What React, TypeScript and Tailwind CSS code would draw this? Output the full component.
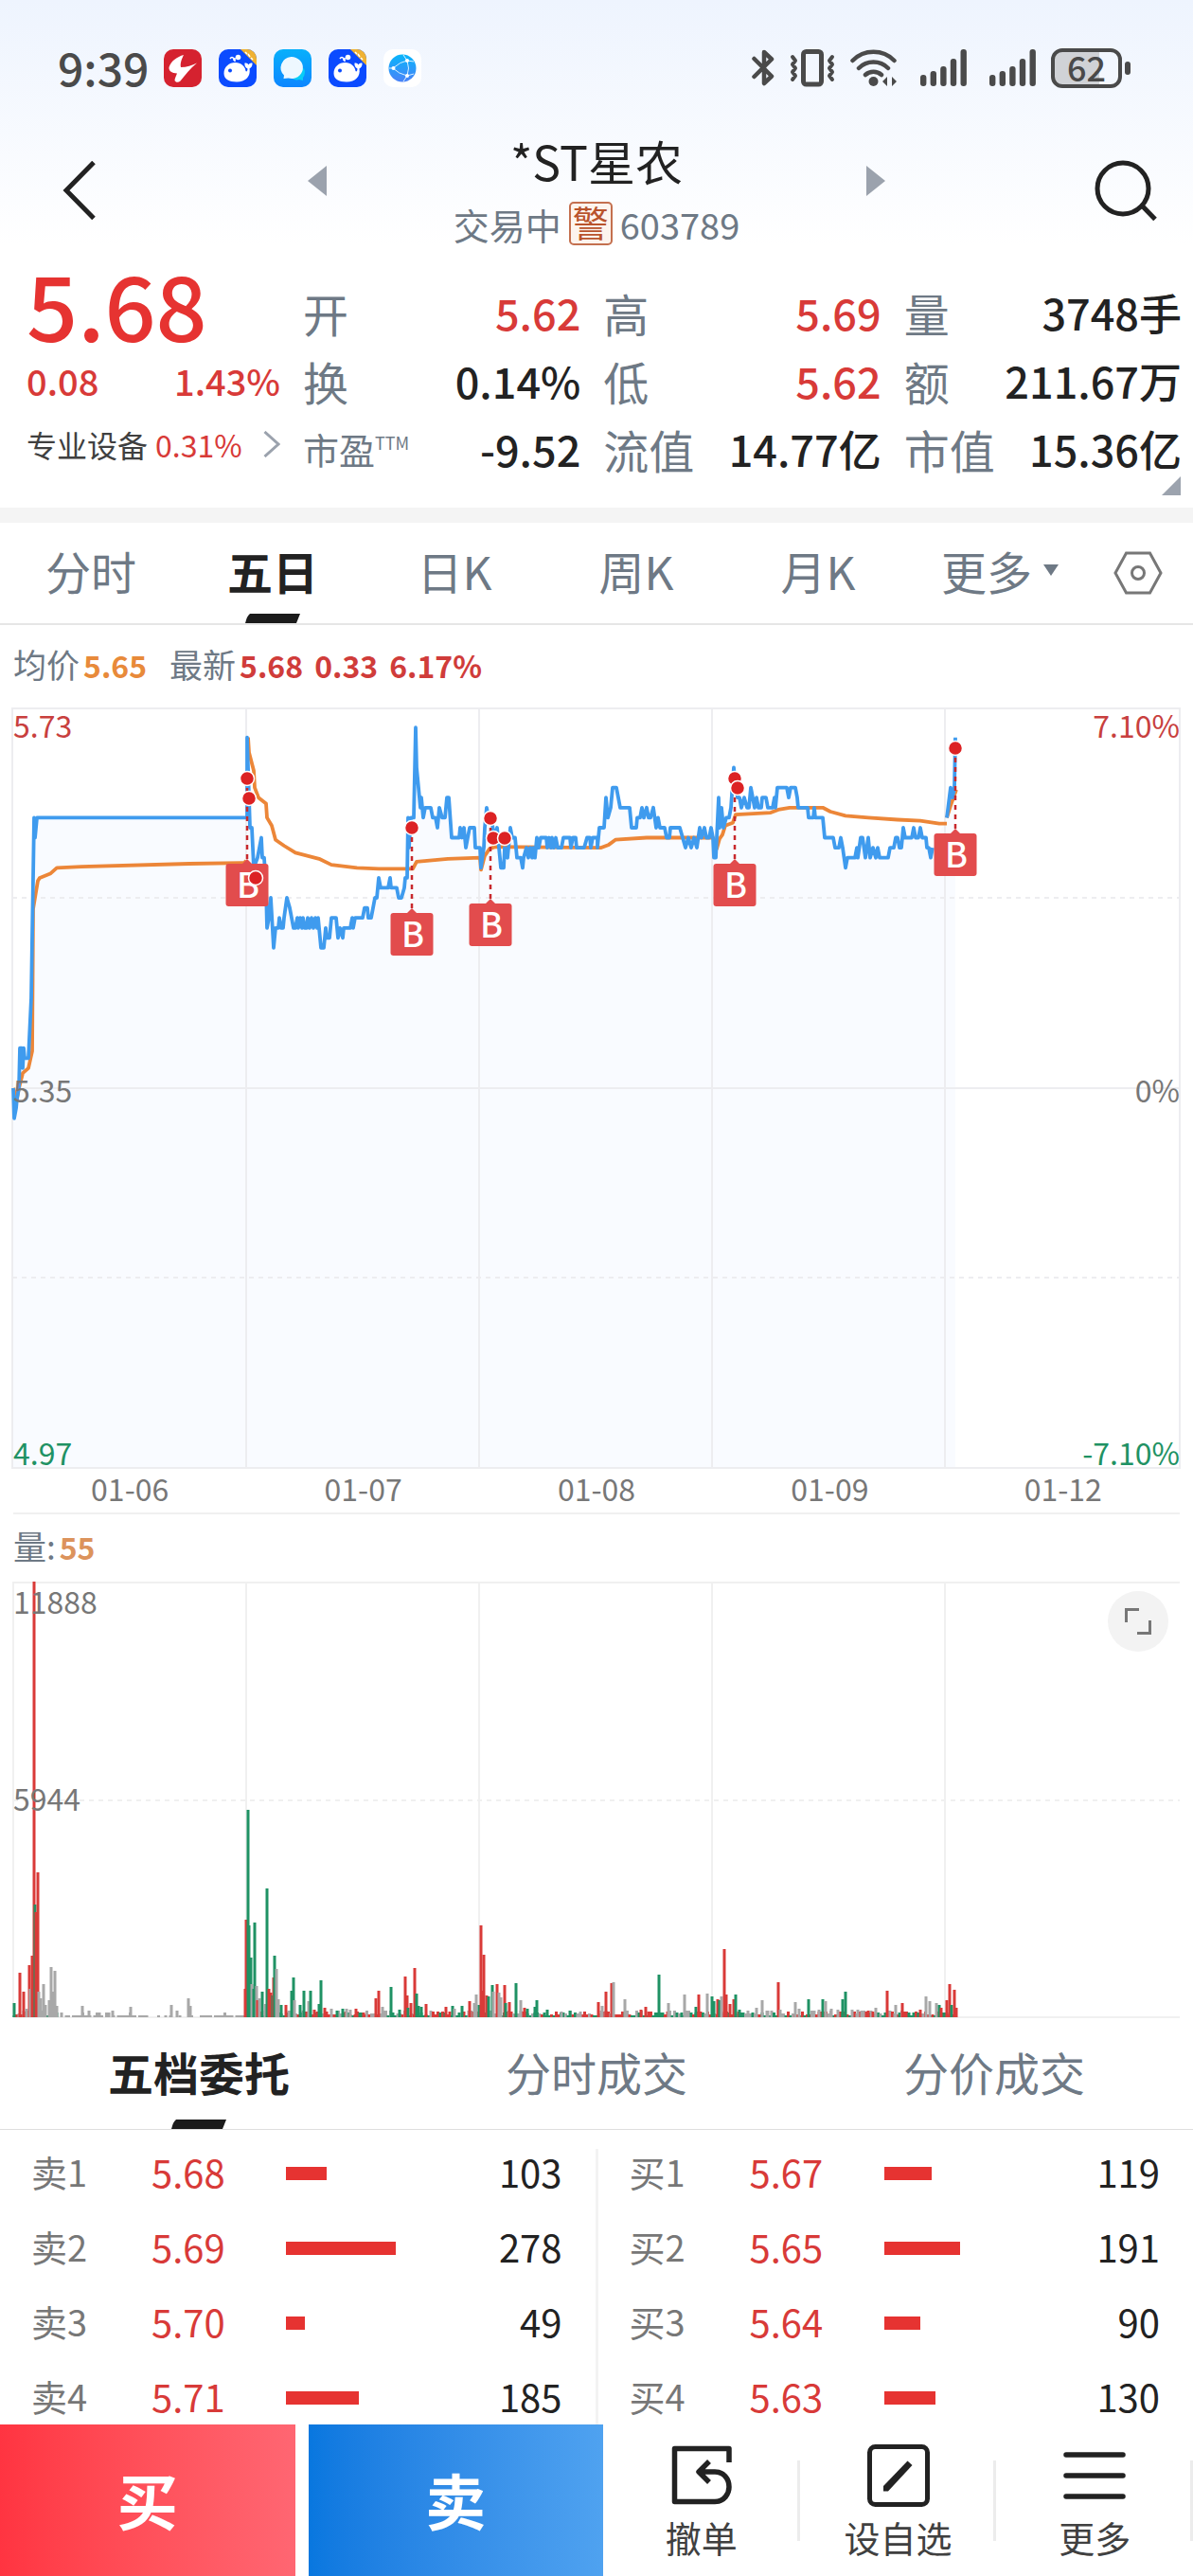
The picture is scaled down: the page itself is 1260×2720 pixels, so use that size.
import { useState } from "react";

type Point = [number, number];
type Tone = "r" | "g" | "n";

const quotes = [
  { label: "开", value: "5.62", up: true },
  { label: "高", value: "5.69", up: true },
  { label: "量", value: "3748手" },
  { label: "换", value: "0.14%" },
  { label: "低", value: "5.62", up: true },
  { label: "额", value: "211.67万" },
  { label: "市盈", sup: "TTM", value: "-9.52" },
  { label: "流值", value: "14.77亿" },
  { label: "市值", value: "15.36亿" },
];

const periods = ["分时", "五日", "日K", "周K", "月K"];
const bookTabs = ["五档委托", "分时成交", "分价成交"];
const days = ["01-06", "01-07", "01-08", "01-09", "01-12"];

const asks = [
  { label: "卖1", price: "5.68", volume: 103 },
  { label: "卖2", price: "5.69", volume: 278 },
  { label: "卖3", price: "5.70", volume: 49 },
  { label: "卖4", price: "5.71", volume: 185 },
];

const bids = [
  { label: "买1", price: "5.67", volume: 119 },
  { label: "买2", price: "5.65", volume: 191 },
  { label: "买3", price: "5.64", volume: 90 },
  { label: "买4", price: "5.63", volume: 130 },
];

// [x, price in cents]
const priceMain: Point[] = [
  [14, 535], [15, 532], [17, 533], [18, 534], [20, 535], [21, 539], [23, 539], [24, 537], [25, 539], [26, 538], [30, 538],
  [32, 542], [33, 544], [36, 562], [37, 560], [39, 562], [261, 562],
];
const priceRest: Point[] = [
  [261, 570], [262, 567], [263, 564], [264, 561], [266, 561], [267, 559], [268, 557], [272, 558], [276, 560], [277, 558], [279, 558],
  [281, 555], [282, 551], [284, 552], [286, 554], [289, 549], [291, 551], [294, 551], [295, 552], [297, 551], [299, 551], [300, 552],
  [303, 554], [306, 553], [310, 551], [312, 551], [314, 552], [315, 551], [317, 552], [319, 551], [320, 552], [322, 551], [324, 551],
  [325, 552], [327, 551], [329, 552], [331, 551], [333, 552], [335, 551], [336, 552], [339, 549], [342, 549], [344, 551], [345, 550],
  [348, 550], [350, 552], [355, 552], [357, 550], [359, 551], [362, 550], [363, 551], [370, 551], [372, 552], [373, 551], [375, 552],
  [383, 552], [385, 553], [388, 553], [389, 552], [392, 552], [394, 553], [396, 554], [398, 554], [400, 556], [402, 555], [410, 555],
  [412, 556], [413, 555], [419, 555], [421, 554], [424, 554], [427, 555], [428, 556], [430, 556], [431, 562], [432, 559], [434, 562],
  [437, 562], [439, 571], [440, 567], [443, 564], [444, 563], [445, 564], [447, 562], [449, 563], [455, 563], [457, 562], [460, 562],
  [462, 561], [464, 563], [467, 562], [470, 562], [472, 564], [474, 564], [477, 560], [485, 560], [486, 561], [488, 560], [490, 561],
  [492, 559], [494, 560], [496, 561], [501, 561], [502, 559], [507, 559], [508, 557], [511, 559], [512, 561], [514, 563], [516, 562],
  [519, 562], [522, 560], [525, 561], [527, 559], [529, 557], [532, 557], [533, 559], [536, 558], [539, 561], [541, 560], [544, 560],
  [546, 558], [550, 558], [552, 557], [553, 558], [556, 559], [558, 558], [560, 559], [562, 558], [563, 559], [565, 558], [567, 560],
  [569, 559], [571, 560], [577, 560], [578, 559], [580, 560], [582, 559], [583, 560], [585, 559], [587, 560], [589, 559], [593, 559],
  [595, 560], [602, 560], [603, 559], [605, 560], [608, 560], [609, 559], [617, 559], [620, 560], [623, 560], [624, 559], [626, 560],
  [631, 560], [631, 559], [633, 561], [638, 561], [640, 564], [642, 562], [645, 563], [647, 565], [651, 565], [653, 564], [655, 563],
  [665, 563], [667, 561], [672, 561], [673, 562], [676, 562], [678, 563], [680, 562], [683, 563], [685, 562], [687, 562], [690, 563],
  [693, 561], [695, 562], [697, 561], [702, 561], [704, 560], [707, 560], [708, 561], [718, 561], [721, 560], [724, 559], [727, 560],
  [730, 559], [733, 560], [736, 559], [739, 561], [741, 560], [744, 561], [746, 560], [749, 560], [751, 561], [753, 560], [754, 558],
  [756, 558], [759, 564], [760, 561], [762, 563], [764, 561], [767, 562], [770, 562], [772, 563], [775, 567], [776, 566], [779, 564],
  [781, 564], [783, 563], [786, 564], [789, 563], [791, 563], [793, 565], [795, 564], [797, 563], [799, 564], [801, 563], [804, 563],
  [805, 564], [809, 564], [811, 563], [816, 563], [818, 564], [819, 563], [821, 565], [831, 565], [833, 564], [835, 565], [840, 565],
  [842, 564], [843, 563], [853, 563], [854, 562], [859, 562], [860, 563], [861, 562], [869, 562], [871, 560], [880, 560], [882, 559],
  [886, 559], [888, 560], [890, 559], [893, 557], [895, 558], [903, 558], [905, 559], [906, 558], [909, 560], [911, 560], [914, 558],
  [917, 560], [919, 558], [922, 559], [925, 558], [927, 559], [929, 558], [938, 558], [940, 559], [944, 559], [946, 560], [948, 560],
  [950, 559], [952, 559], [954, 561], [956, 560], [963, 560], [965, 561], [967, 560], [970, 560], [972, 561], [974, 560], [978, 560],
  [979, 559], [981, 559], [983, 558], [985, 559],
];
const priceLast: Point[] = [[1000, 562], [1004, 565], [1006, 564], [1008, 565], [1009, 570]];

const average: Point[] = [
  [14, 535], [18, 534], [20, 535], [24, 536.5], [30, 537], [34, 538.7], [35, 552.9], [38, 554.6], [40, 555.7], [42, 556], [53, 556.4],
  [60, 557], [86, 557.1], [200, 557.4], [258, 557.5], [260, 557.7],
];
const averageRest: Point[] = [
  [262, 570], [263, 568.5], [268, 566.7], [269, 565], [273, 564], [281, 563.4], [282, 562], [287, 561.2], [291, 559.8], [300, 559.2],
  [312, 558.5], [337, 557.9], [350, 557.3], [377, 557], [400, 556.9], [436, 556.9], [440, 557.6], [473, 557.9], [507, 558],
  [508, 556.8], [512, 558.2], [517, 558.9], [523, 559.1], [635, 559], [643, 559.3], [650, 559.8], [683, 560], [753, 560],
  [757, 558.9], [760, 559.9], [763, 560.3], [766, 561.2], [774, 561.5], [777, 562.3], [814, 562.5], [822, 562.8], [834, 563],
  [869, 563], [877, 562.6], [893, 562.2], [917, 562], [948, 561.8], [972, 561.7], [992, 561.4], [1000, 561.4],
];
const averageLast: Point[] = [[1000, 562], [1004, 563.2], [1010, 564.8]];

const dots: Point[] = [[261, 75], [263, 96], [435, 127], [518, 117], [521, 138], [533, 138], [776, 75], [779, 85], [1009, 43], [270, 180]];

// [centre x, top of badge, top of dashed stem]
const badges: [number, number, number][] = [
  [261, 165, 75], [435, 217, 127], [518, 207, 117], [776, 165, 75], [1009, 133, 43],
];

const volumes: [number, number, Tone][] = [
  [15, 15, "g"], [21, 47, "r"], [25, 27, "r"], [28, 9, "n"], [31, 55, "r"], [32, 30, "n"], [34, 65, "r"], [36, 460, "r"],
  [37, 119, "g"], [38, 111, "r"], [40, 153, "r"], [41, 27, "n"], [43, 20, "n"], [46, 35, "n"], [48, 13, "n"], [52, 18, "n"],
  [54, 53, "n"], [56, 27, "n"], [58, 49, "n"], [60, 12, "n"], [87, 12, "n"], [94, 7, "n"], [119, 7, "n"], [138, 11, "n"],
  [181, 13, "n"], [187, 7, "n"], [199, 20, "n"], [201, 12, "n"], [259, 30, "r"], [260, 103, "r"], [262, 219, "g"], [263, 97, "g"],
  [265, 63, "g"], [266, 35, "n"], [268, 30, "g"], [269, 100, "g"], [271, 33, "n"], [272, 18, "r"], [274, 20, "n"], [277, 27, "g"],
  [280, 14, "n"], [282, 136, "g"], [284, 30, "r"], [286, 26, "r"], [288, 23, "g"], [289, 42, "r"], [290, 65, "g"], [292, 51, "n"],
  [294, 19, "n"], [297, 13, "g"], [302, 13, "r"], [308, 28, "g"], [310, 42, "g"], [311, 18, "n"], [317, 13, "g"], [321, 28, "g"],
  [326, 17, "n"], [328, 28, "g"], [332, 8, "r"], [337, 14, "g"], [339, 39, "g"], [343, 10, "r"], [350, 9, "n"], [356, 7, "g"],
  [362, 9, "g"], [366, 9, "n"], [370, 8, "n"], [376, 9, "r"], [384, 5, "r"], [397, 20, "r"], [400, 28, "r"], [404, 11, "n"],
  [413, 32, "g"], [422, 8, "g"], [428, 43, "r"], [430, 23, "r"], [431, 10, "g"], [434, 15, "r"], [438, 52, "r"], [440, 25, "g"],
  [442, 12, "g"], [445, 11, "g"], [450, 14, "r"], [471, 11, "r"], [478, 12, "g"], [480, 9, "n"], [488, 12, "g"], [496, 17, "r"],
  [501, 15, "n"], [503, 24, "n"], [506, 13, "g"], [508, 97, "r"], [510, 28, "r"], [511, 66, "r"], [514, 23, "r"], [516, 22, "g"],
  [520, 34, "g"], [521, 27, "n"], [525, 35, "r"], [527, 26, "n"], [529, 21, "n"], [533, 34, "r"], [534, 15, "g"], [538, 16, "r"],
  [545, 36, "g"], [550, 18, "n"], [554, 10, "r"], [557, 9, "g"], [565, 11, "g"], [567, 18, "g"], [578, 8, "g"], [593, 6, "n"],
  [602, 7, "g"], [613, 6, "n"], [632, 16, "r"], [636, 12, "n"], [640, 27, "r"], [646, 36, "r"], [648, 37, "n"], [660, 19, "n"],
  [677, 8, "r"], [682, 11, "r"], [696, 45, "g"], [706, 15, "n"], [723, 24, "n"], [735, 11, "g"], [738, 24, "r"], [747, 25, "n"],
  [752, 22, "g"], [754, 17, "g"], [758, 19, "r"], [760, 18, "g"], [762, 22, "n"], [765, 72, "r"], [767, 24, "r"], [771, 14, "r"],
  [775, 19, "r"], [777, 24, "g"], [781, 8, "g"], [799, 10, "n"], [805, 18, "n"], [811, 7, "n"], [822, 37, "r"], [824, 8, "n"],
  [840, 16, "n"], [844, 9, "n"], [854, 19, "g"], [865, 8, "n"], [869, 19, "g"], [872, 17, "n"], [878, 9, "n"], [885, 8, "n"],
  [890, 19, "g"], [893, 27, "g"], [900, 8, "n"], [906, 8, "n"], [917, 7, "r"], [922, 6, "r"], [925, 10, "n"], [937, 28, "r"],
  [946, 13, "n"], [953, 15, "r"], [972, 8, "r"], [978, 22, "n"], [982, 17, "n"], [989, 15, "n"], [992, 13, "g"], [994, 10, "r"],
  [1000, 18, "r"], [1003, 35, "r"], [1005, 13, "g"], [1008, 29, "r"], [1010, 10, "r"],
];

const toneFill: Record<Tone, string> = { r: "#d93a38", g: "#1f9264", n: "#a8a8a8" };

// thin trades between the larger prints
const thin: [number, number, Tone][] = [];
for (let i = 0; i < 398; i++) {
  const x = 15 + i * 2.5;
  const n = (i * 37 + ((i * i) % 23) * 11) % 29;
  if (x > 62 && x < 258) {
    if (n > 9) thin.push([x, n > 25 ? 5 : 2, "n"]);
  } else {
    thin.push([x, 2 + (n % 6), n % 3 === 0 ? "g" : n % 3 === 1 ? "r" : "n"]);
  }
}

const toPath = (points: Point[]) =>
  points.map(([x, p], i) => `${i ? "L" : "M"}${x} ${((573 - p) * 10.58).toFixed(1)}`).join("");

const gridX = [260, 506, 752, 998];

function AppIcons() {
  const whale = (
    <svg viewBox="0 0 40 40" className="size-10 rounded-[10px]" aria-hidden="true">
      <rect width="40" height="40" fill="#0b4bff" />
      <path d="M23 0H40V17Z" fill="#f0b232" />
      <path d="M28 3l2 2M31 5l2 3M34 9l2 2" stroke="#fff" strokeWidth="1.5" />
      <path d="M5.500 25.500C5.500 18.500 11 14 17.500 14c6 0 10.500 4 11 9 .5 1 2 .5 2-2.500-2-1-3.500-3-3-6 2 0 3.500.5 4 2 .5-1.500 2-2 4-2 .3 3-1 5-3 6 1.500 8-4 14-13.500 14-8 0-13.500-3-13.500-9Z" fill="#fff" />
      <circle cx="12" cy="22.500" r="2" fill="#0b4bff" />
      <circle cx="20.500" cy="8.500" r="2.800" fill="#fff" />
      <path d="M12 10q2-3 4 0v2M17 13V9" stroke="#fff" strokeWidth="1.600" fill="none" />
    </svg>
  );
  return (
    <div className="flex gap-[18px]">
      <svg viewBox="0 0 40 40" className="size-10 rounded-[10px]" aria-hidden="true">
        <rect width="40" height="40" fill="#d5222f" />
        <path d="M5.500 19C8 12 14 8 21 6c-2 4-4 9-3 13 6 0 12-2 17-4.500C28 20 22 28 17.500 33.500 15 35.500 12.500 35 11.500 33c0-2 1.500-5 2.500-7.500-5-.5-9-2-8.500-6.500Z" fill="#fff" />
      </svg>
      {whale}
      <svg viewBox="0 0 40 40" className="size-10 rounded-[10px]" aria-hidden="true">
        <defs>
          <linearGradient id="msg" x1="0" y1="0" x2="0" y2="1">
            <stop offset="0" stopColor="#08b0fb" />
            <stop offset="1" stopColor="#0d86ff" />
          </linearGradient>
        </defs>
        <rect width="40" height="40" fill="url(#msg)" />
        <path d="M32 20a10 10 0 0 1-1 10v3l-4-1c-3 1-6 0-8-2Z" fill="#08cdf7" />
        <path d="M18.500 8a12 11.500 0 1 1-3 22.500L10.500 31l.5-3.500A12 11.500 0 0 1 18.500 8Z" fill="#eef8ff" />
      </svg>
      {whale}
      <svg viewBox="0 0 40 40" className="size-10 rounded-[10px]" aria-hidden="true">
        <defs>
          <linearGradient id="globe" x1="0" y1="0" x2="0" y2="1">
            <stop offset="0" stopColor="#08b6fb" />
            <stop offset="1" stopColor="#4a82f8" />
          </linearGradient>
        </defs>
        <rect width="40" height="40" fill="#fff" />
        <circle cx="20" cy="20" r="14.500" fill="url(#globe)" />
        <path d="M10 20Q18 13 25 12M10 20q6 6 15 8M25 12q3 8 0 16M25 12l-4-6M25 12l7 1M25 28l-4 6M25 28l7-2M10 20H6" stroke="#d9f0ff" strokeWidth="1" fill="none" />
        <circle cx="10.500" cy="20" r="2" fill="#fff" />
        <circle cx="25" cy="12" r="2" fill="#fff" />
        <circle cx="25" cy="28" r="2" fill="#fff" />
      </svg>
    </div>
  );
}

function Signal() {
  return (
    <svg viewBox="0 0 49 40" className="h-10 w-[49px]" fill="#4a4a4a" aria-hidden="true">
      <rect x="0" y="27" width="6.400" height="12" rx="3" />
      <rect x="10.600" y="23" width="6.400" height="16" rx="3" />
      <rect x="21.200" y="18" width="6.400" height="21" rx="3" />
      <rect x="31.800" y="10" width="6.400" height="29" rx="3" />
      <rect x="42.500" y="0" width="6.400" height="39" rx="3" />
    </svg>
  );
}

function StatusBar() {
  return (
    <div className="flex h-[143px] items-center justify-between pr-[66px] pl-[61px] text-[#4a4a4a]">
      <div className="flex items-center gap-4">
        <span className="pb-1 text-[48px] leading-none font-medium">9:39</span>
        <AppIcons />
      </div>
      <div className="flex items-center">
        <svg viewBox="0 0 24 40" className="mr-4 h-10 w-6" fill="none" stroke="#4a4a4a" strokeWidth="4.500" strokeLinecap="round" strokeLinejoin="round" aria-hidden="true">
          <path d="M2.500 10 21 28.500 13 36V3l8 7.500L2.500 29" />
        </svg>
        <svg viewBox="0 0 48 40" className="mr-4 h-10 w-12" fill="none" stroke="#4a4a4a" strokeLinecap="round" strokeLinejoin="round" aria-hidden="true">
          <rect x="14.500" y="2.500" width="19" height="34.500" rx="3" strokeWidth="5" />
          <path d="M3 8l3 4-3 4 3 4-3 4 3 4-3 4M45 8l-3 4 3 4-3 4 3 4-3 4 3 4" strokeWidth="4" />
        </svg>
        <svg viewBox="0 0 50 40" className="mr-6 h-10 w-[50px]" fill="none" stroke="#4a4a4a" strokeWidth="4.500" strokeLinecap="round" aria-hidden="true">
          <path d="M2.500 12a31 31 0 0 1 44 0M9 20a22 22 0 0 1 31 0M16 27a13 13 0 0 1 17 0" />
          <circle cx="24.500" cy="34" r="5" fill="#4a4a4a" stroke="none" />
          <path d="M34 34l5-5v10ZM49 34l-5-5v10Z" fill="#4a4a4a" stroke="none" />
        </svg>
        <span className="mr-6"><Signal /></span>
        <span className="mr-4"><Signal /></span>
        <div className="flex h-[42px] w-[75px] items-center justify-center rounded-[12px] border-[4px] border-[#4a4a4a] bg-linear-to-r from-[#d0d2d6] from-70% to-transparent to-70%">
          <span className="pb-1 text-[36px] leading-none font-medium">62</span>
        </div>
        <span className="ml-[3px] h-3.5 w-1.5 rounded-full bg-[#4a4a4a]" />
      </div>
    </div>
  );
}

function TitleBar() {
  return (
    <div className="grid grid-cols-[1fr_610px_1fr] items-center">
      <button type="button" aria-label="返回" className="justify-self-start pl-[65px]">
        <svg viewBox="0 0 36 62" className="h-[62px] w-9" fill="none" stroke="#222" strokeWidth="5">
          <path d="M34 1.500 5 31l29 29.500" />
        </svg>
      </button>
      <div className="flex items-center justify-between">
        <button type="button" aria-label="上一只" className="pb-5">
          <svg viewBox="0 0 20 32" className="h-8 w-5"><path d="M20 0v32L0 16Z" fill="#9ba2ad" /></svg>
        </button>
        <div className="flex flex-col items-center">
          <h1 className="text-[50px] leading-[52px] text-[#222]">*ST星农</h1>
          <div className="mt-[18px] flex h-[46px] items-center gap-2 text-[38px] text-[#6e7985]">
            <span>交易中</span>
            <span className="flex size-[46px] items-center justify-center rounded-[5px] border-2 border-[#c4704f] bg-[#fdf4ee] pb-1 text-[38px] leading-none text-[#b9532c]">警</span>
            <span>603789</span>
          </div>
        </div>
        <button type="button" aria-label="下一只" className="pb-5">
          <svg viewBox="0 0 20 32" className="h-8 w-5"><path d="M0 0v32l20-16Z" fill="#9ba2ad" /></svg>
        </button>
      </div>
      <button type="button" aria-label="搜索" className="justify-self-end pr-[38px]">
        <svg viewBox="0 0 66 64" className="h-16 w-[66px]" fill="none" stroke="#222" strokeWidth="5">
          <circle cx="30" cy="30" r="27" />
          <path d="M50 48l14 14.500" />
        </svg>
      </button>
    </div>
  );
}

function Quote() {
  return (
    <section className="relative flex pt-[35px] pr-3 pb-[26px]">
      <div className="w-80 shrink-0 pr-6 pl-7">
        <p className="mb-5 text-[95px] leading-[52px] font-medium text-[#e63331]">5.68</p>
        <div className="flex justify-between text-[38px] leading-[72px] font-medium text-[#d83a38]">
          <span>0.08</span>
          <span>1.43%</span>
        </div>
        <a href="#sector" className="flex items-center text-[32px] leading-[62px] whitespace-nowrap text-[#404040]">
          专业设备<span className="ml-2 text-[#d83a38]">0.31%</span>
          <svg viewBox="0 0 18 28" className="ml-auto h-7 w-[18px]" fill="none" stroke="#9ba2ad" strokeWidth="3">
            <path d="M1.500 1 16 14 1.500 27" />
          </svg>
        </a>
      </div>
      <dl className="grid flex-1 grid-cols-3 gap-x-6">
        {quotes.map((q) => (
          <div key={q.label} className="flex h-[72px] items-center justify-between text-[48px] leading-[72px] whitespace-nowrap">
            <dt className={q.sup ? "flex text-[38px] text-[#6e7985]" : "text-[#6e7985]"}>
              {q.label}
              {q.sup && <span className="text-[18px] leading-[58px]">{q.sup}</span>}
            </dt>
            <dd className={q.up ? "text-[45px] font-medium text-[#d83a38]" : "text-[45px] font-medium text-[#222]"}>{q.value}</dd>
          </div>
        ))}
      </dl>
      <svg viewBox="0 0 20 20" className="absolute right-[13px] bottom-[13px] size-5"><path d="M20 0v20H0Z" fill="#9ca3ae" /></svg>
    </section>
  );
}

function Underline() {
  return (
    <svg viewBox="0 0 58 10" className="absolute bottom-0 left-1/2 h-2.5 w-[58px] -translate-x-1/2">
      <path d="M5 0h53l-4 10H0Q2 2 5 0Z" fill="#1b1b1b" />
    </svg>
  );
}

function PriceChart() {
  const line = toPath(priceMain) + toPath(priceRest).replace("M", "L");
  return (
    <svg viewBox="0 0 1260 804" className="block w-full overflow-visible" role="img" aria-label="五日走势">
      <path d={`${line}V803H14Z`} fill="#f9fbff" />
      <path d={`${toPath([...priceRest.slice(-1), ...priceLast])}V803H985Z`} fill="#f9fbff" />
      <g stroke="#ededf0" strokeWidth="2">
        <path d="M13 1H1246V803H13Z" fill="none" />
        {gridX.map((x) => <path key={x} d={`M${x} 0V803`} />)}
        <path d="M13 402H1246" />
        <path d="M13 201H1246M13 602H1246" strokeDasharray="5 5" />
      </g>
      <g fill="none" strokeWidth="3.800" strokeLinejoin="round">
        <path d={toPath(average) + toPath(averageRest) + toPath(averageLast)} stroke="#ec8638" />
        <path d={line + toPath(priceLast)} stroke="#3f9bee" />
      </g>
      <g fontSize="32">
        <text x="14" y="32" fill="#c8403e">5.73</text>
        <text x="14" y="417" fill="#777">5.35</text>
        <text x="14" y="800" fill="#1f9264">4.97</text>
        <text x="1246" y="32" textAnchor="end" fill="#c8403e">7.10%</text>
        <text x="1246" y="417" textAnchor="end" fill="#777">0%</text>
        <text x="1246" y="800" textAnchor="end" fill="#1f9264">-7.10%</text>
      </g>
      {badges.map(([x, top, stem]) => (
        <g key={x}>
          <path d={`M${x} ${stem}V${top - 4}`} stroke="#c8282c" strokeWidth="2.500" strokeDasharray="5 5" />
          <path d={`M${x - 5} ${top}l5 -5l5 5Z`} fill="#e24c4d" />
          <rect x={x - 22.5} y={top} width="45" height="45" rx="3" fill="#e24c4d" />
          <text x={x + 1} y={top + 36} textAnchor="middle" fontSize="36" fontWeight="500" fill="#fff">B</text>
        </g>
      ))}
      {dots.map(([x, y]) => (
        <circle key={`${x}-${y}`} cx={x} cy={y} r="7.500" fill="#dc2224" stroke="#fff" strokeWidth="1.500" />
      ))}
    </svg>
  );
}

function VolumeChart() {
  return (
    <div className="relative">
      <svg viewBox="0 0 1260 461" className="block w-full overflow-visible" role="img" aria-label="成交量">
        <g stroke="#f0f0f0" strokeWidth="2">
          <path d="M14 460V1H1246M14 460H1246" fill="none" />
          {gridX.map((x) => <path key={x} d={`M${x} 0V460`} />)}
          <path d="M14 231H1246" strokeDasharray="5 5" />
        </g>
        {[...thin, ...volumes].map(([x, h, tone], i) => (
          <rect key={i} x={x - 1.5} y={460 - h} width="3" height={h} fill={toneFill[tone]} />
        ))}
        <g fontSize="32" fill="#777">
          <text x="14" y="34">11888</text>
          <text x="14" y="242">5944</text>
        </g>
      </svg>
      <button type="button" aria-label="全屏" className="absolute top-2.5 right-[26px] flex size-16 items-center justify-center rounded-full bg-[#f3f3f3]">
        <svg viewBox="0 0 30 30" className="size-[30px]" fill="none" stroke="#777" strokeWidth="3">
          <path d="M2.500 16V2.500H16M27.500 14v13.500H14" />
        </svg>
      </button>
    </div>
  );
}

function Book({ rows, name }: { rows: typeof asks; name: string }) {
  return (
    <table aria-label={name} className="flex-1 table-fixed self-start text-[40px] leading-none">
      <tbody>
        {rows.map((row) => (
          <tr key={row.label} className="h-[79px]">
            <th scope="row" className="w-40 pl-[33px] text-left text-[38px] font-normal text-[#777]">{row.label}</th>
            <td className="w-[142px] text-[#d83a38]">{row.price}</td>
            <td>
              <div className="mt-1 h-3.5 bg-[#e63331]" style={{ width: Math.round(row.volume * 0.417) }} />
            </td>
            <td className="w-40 pr-[35px] text-right text-[#222]">{row.volume}</td>
          </tr>
        ))}
      </tbody>
    </table>
  );
}

function BottomBar() {
  return (
    <nav className="flex h-40 shrink-0 bg-white text-[#404040]">
      <button type="button" className="mr-3.5 flex-3 bg-linear-to-r from-[#ff3441] to-[#ff6672] pb-1 text-[64px] leading-none font-bold text-white">买</button>
      <button type="button" className="flex-3 bg-linear-to-r from-[#0877df] to-[#4fa2f0] pb-1 text-[64px] leading-none font-bold text-white">卖</button>
      <button type="button" className="relative flex flex-2 flex-col items-center pt-5">
        <svg viewBox="0 0 68 68" className="size-[68px]" fill="none" stroke="#222" strokeWidth="5.500">
          <path d="M63 20V5.500H5.500V61.500H48C58 61.500 63 53 63 46 63 37 57 30 48 30H32M42 19 31 30 42 41" strokeLinejoin="round" />
        </svg>
        <span className="pt-1 text-[38px] leading-[54px]">撤单</span>
        <i className="absolute top-[38px] right-0 h-[85px] w-[3px] bg-[#ececec]" />
      </button>
      <button type="button" className="relative flex flex-2 flex-col items-center pt-5">
        <svg viewBox="0 0 68 68" className="size-[68px]" fill="none" stroke="#222" strokeWidth="5">
          <rect x="3.500" y="3.500" width="61" height="61" rx="6" />
          <path d="M18 50.500V45L43.500 18.500 48.500 23 23 50.500Z" fill="#222" stroke="none" />
        </svg>
        <span className="pt-1 text-[38px] leading-[54px]">设自选</span>
        <i className="absolute top-[38px] right-0 h-[85px] w-[3px] bg-[#ececec]" />
      </button>
      <button type="button" className="relative flex flex-2 flex-col items-center pt-5">
        <svg viewBox="0 0 68 68" className="size-[68px]" fill="none" stroke="#222" strokeWidth="5.500" strokeLinecap="round">
          <path d="M4 12H64M4 34H64M4 56H64" />
        </svg>
        <span className="pt-1 text-[38px] leading-[54px]">更多</span>
        <i className="absolute top-[38px] right-0 h-[85px] w-[3px] bg-[#ececec]" />
      </button>
    </nav>
  );
}

export default function App() {
  const [period, setPeriod] = useState("五日");
  const [bookTab, setBookTab] = useState("五档委托");

  return (
    <div className="flex h-screen flex-col overflow-hidden bg-white font-['Noto_Sans_CJK_SC',sans-serif]">
      <header className="shrink-0 bg-linear-to-b from-[#eef4fe] to-white">
        <StatusBar />
        <TitleBar />
      </header>
      <Quote />
      <div className="h-4 shrink-0 bg-[#f4f4f4]" />

      <div className="flex h-[108px] shrink-0 border-b-2 border-[#e6e6e6] text-[48px] leading-none text-[#6e7985]">
        {periods.map((p) => (
          <button
            key={p}
            type="button"
            onClick={() => setPeriod(p)}
            className={p === period ? "relative flex-1 pb-1.5 font-bold text-[#222]" : "relative flex-1 pb-1.5"}
          >
            {p}
            {p === period && <Underline />}
          </button>
        ))}
        <button type="button" className="flex flex-1 items-center justify-center gap-3 pb-1.5">
          更多
          <svg viewBox="0 0 16 12" className="h-3 w-4"><path d="M0 0h16l-8 12Z" fill="#6e7985" /></svg>
        </button>
        <button type="button" aria-label="设置" className="flex w-[108px] items-center justify-start pl-6">
          <svg viewBox="0 0 52 46" className="h-[46px] w-[52px]" fill="none" stroke="#777" strokeWidth="3">
            <path d="M13.500 2H38.500L50 23 38.500 44H13.500L2 23Z" />
            <circle cx="26" cy="23" r="6.500" />
          </svg>
        </button>
      </div>

      <div className="flex h-[87px] shrink-0 items-center px-3.5 pb-1 text-[35px] text-[#6e7985]">
        均价<b className="ml-1 text-[32px] text-[#e88a3a]">5.65</b>
        <span className="ml-6">最新</span>
        <span className="ml-1 flex gap-3 text-[32px] text-[#d03c3a]">
          <b>5.68</b>
          <b>0.33</b>
          <b>6.17%</b>
        </span>
      </div>

      <PriceChart />
      <div className="mx-3.5 grid h-12 shrink-0 grid-cols-5 border-b-2 border-[#f0f0f0] text-center text-[32px] leading-10 text-[#777]">
        {days.map((d) => <span key={d}>{d}</span>)}
      </div>
      <div className="flex h-[71px] shrink-0 items-center px-3.5 pb-1 text-[35px] text-[#6e7985]">
        量:<b className="ml-1 text-[32px] text-[#dc935c]">55</b>
      </div>
      <VolumeChart />

      <div className="flex h-[118px] shrink-0 border-b border-[#dedede] text-[48px] leading-none text-[#6e7985]">
        {bookTabs.map((t) => (
          <button
            key={t}
            type="button"
            onClick={() => setBookTab(t)}
            className={t === bookTab ? "relative flex-1 pb-1.5 font-bold text-[#222]" : "relative flex-1 pb-1.5"}
          >
            {t}
            {t === bookTab && <Underline />}
          </button>
        ))}
      </div>
      <div className="flex min-h-0 flex-1 overflow-hidden pt-1">
        <Book rows={asks} name="卖盘" />
        <span className="mt-4 w-[3px] bg-[#f3f3f3]" />
        <Book rows={bids} name="买盘" />
      </div>
      <BottomBar />
    </div>
  );
}
